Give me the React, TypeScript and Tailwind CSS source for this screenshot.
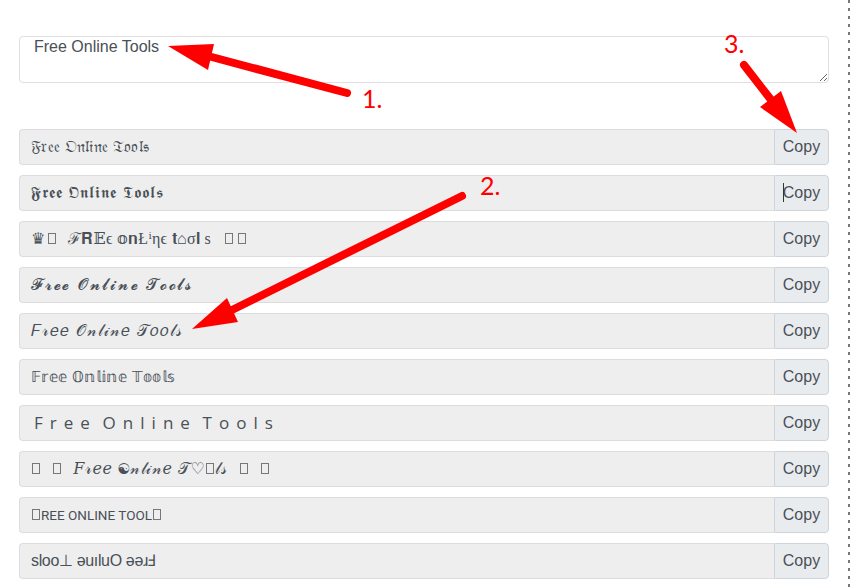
const Tofu = () => <span className="mx-px inline-block h-[11px] w-[8px] border border-[#777]" />;

const serif = "font-['Liberation_Serif','DejaVu_Serif',serif]";

const rows = [
  { content: "𝔉𝔯𝔢𝔢 𝔒𝔫𝔩𝔦𝔫𝔢 𝔗𝔬𝔬𝔩𝔰", cls: "tracking-[0.25px]" },
  { content: "𝕱𝖗𝖊𝖊 𝕺𝖓𝖑𝖎𝖓𝖊 𝕿𝖔𝖔𝖑𝖘", cls: "tracking-[1px]" },
  {
    content: (
      <>
        ♛<span className="mx-[3px] inline-block h-[11px] w-[8px] border border-[#777]" />{"  "}ℱ𝐑𝔼ϵ 𝕠𝐧Łⁱηϵ 𝐭⌂σ𝐥 s{"   "}<Tofu /><span className="ml-[3px]" /><Tofu />
      </>
    ),
    cls: serif + " tracking-[0.3px]",
  },
  { content: "𝓕𝓻𝓮𝓮 𝓞𝓷𝓵𝓲𝓷𝓮 𝓣𝓸𝓸𝓵𝓼", cls: "font-['DejaVu_Sans',serif] tracking-[1.75px]" },
  { content: "𝐹𝓇𝑒𝑒 𝒪𝓃𝓁𝒾𝓃𝑒 𝒯𝑜𝑜𝓁𝓈", cls: "font-['DejaVu_Sans',serif] tracking-[1px]" },
  { content: "𝔽𝕣𝕖𝕖 𝕆𝕟𝕝𝕚𝕟𝕖 𝕋𝕠𝕠𝕝𝕤", cls: "text-[15px] tracking-[0.35px]" },
  { content: "F r e e  O n l i n e  T o o l s", cls: "pl-[14px] font-['Open_Sans',sans-serif] text-[17px] tracking-[1.3px]" },
  {
    content: (
      <>
        <Tofu />{"  "}<Tofu />{"  "}𝐹𝓇𝑒𝑒 ☯𝓃𝓁𝒾𝓃𝑒 𝒯♡<Tofu />𝓁𝓈{"  "}<Tofu />{"  "}<Tofu />
      </>
    ),
    cls: "font-['DejaVu_Serif',serif] tracking-[0.5px]",
  },
  {
    content: (
      <>
        <Tofu />REE ONLINE TOOL<Tofu />
      </>
    ),
    cls: "font-['Roboto',sans-serif] text-[13.5px]",
  },
  { content: "sloo⊥ ǝuıluO ǝǝɹℲ", cls: "tracking-[-0.35px] pl-[10px]" },
];

function Annotations() {
  return (
    <svg className="absolute left-0 top-0 pointer-events-none" width="850" height="587" viewBox="0 0 850 587" fill="none">
      <g stroke="#ff0000" strokeWidth="8" strokeLinecap="round">
        <path d="M347 93L208 56" />
        <path d="M462 196L232 310" />
        <path d="M744 65L772 101" />
      </g>
      <g fill="#ff0000">
        <path d="M168 46L214 44L208 70Z" />
        <path d="M192 329L227 298L238 322Z" />
        <path d="M797 133L781 91L760 107Z" />
      </g>
      <g fill="#ff0000" fontFamily="Lato, sans-serif" fontSize="25">
        <text x="362" y="108">1.</text>
        <text x="480" y="195">2.</text>
        <text x="724" y="53">3.</text>
      </g>
    </svg>
  );
}

export default function App() {
  return (
    <div className="relative flex h-[587px] w-[850px] overflow-hidden bg-white font-['Liberation_Sans',sans-serif] text-[#495057]">
      <div className="w-[848px] px-[19px] pt-9">
        <textarea
          defaultValue="Free Online Tools"
          className="block h-[47px] w-[810px] rounded border border-[#dfdfe3] px-[14px] py-0 text-base leading-[20px] text-[#495057] outline-none"
        />
        <div className="mt-[46px] flex w-[810px] flex-col gap-2.5">
          {rows.map((row, i) => (
            <div key={i} className="flex h-9">
              <div
                className={
                  "flex-1 whitespace-pre rounded-l border border-r-0 border-[#dcdcdf] bg-[#eeeeee] pl-[11px] text-base leading-[34px] " +
                  row.cls
                }
              >
                {row.content}
              </div>
              <button className="relative w-[55px] rounded-r border border-[#ced4da] bg-[#e9ecef] text-center text-base text-[#495057]">
                {i === 1 && <span className="absolute left-[8px] top-[7px] h-[19px] w-px bg-[#333]" />}
                Copy
              </button>
            </div>
          ))}
        </div>
      </div>
      <div className="h-full w-[2px] bg-[repeating-linear-gradient(to_bottom,#777_0,#777_3px,transparent_3px,transparent_8px)]" />
      <Annotations />
    </div>
  );
}
